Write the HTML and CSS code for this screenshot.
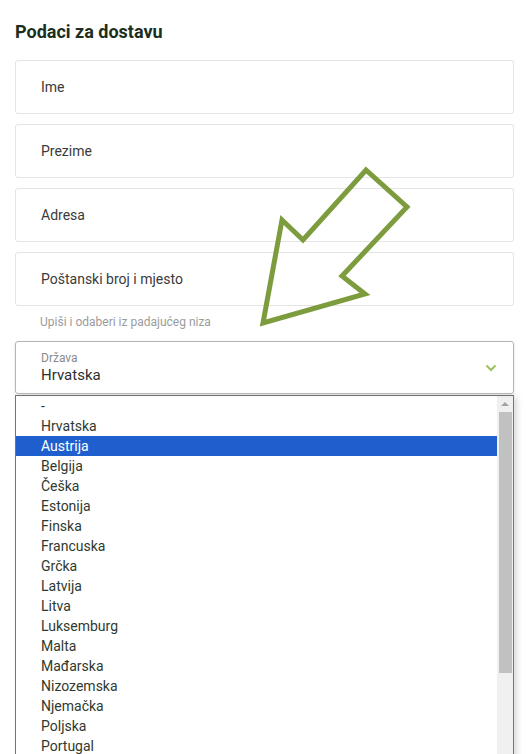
FILE: index.html
```html
<!DOCTYPE html>
<html lang="hr">
    <head>
        <title>Podaci za dostavu</title>
        <meta charset="utf-8">
        <meta name="viewport" content="width=device-width, initial-scale=1.0">
        <link rel="stylesheet" href="styles.css">
    </head>
    <body>
        <main class="delivery">
            <h2>Podaci za dostavu</h2>
            <div class="fields">
                <div class="field">Ime</div>
                <div class="field">Prezime</div>
                <div class="field">Adresa</div>
                <div class="field">Poštanski broj i mjesto</div>
            </div>
            <p class="hint">Upiši i odaberi iz padajućeg niza</p>
            <div class="select">
                <span class="select-label">Država</span>
                <span class="select-value">Hrvatska</span>
                <svg class="chevron" width="12" height="8" viewBox="0 0 12 8">
                    <path d="M1.5 1.5 L6 6 L10.5 1.5" fill="none" stroke="#9cc25c" stroke-width="2"/>
                </svg>
            </div>
            <div class="dropdown">
                <ul class="options">
                    <li>-</li>
                    <li>Hrvatska</li>
                    <li class="selected">Austrija</li>
                    <li>Belgija</li>
                    <li>Češka</li>
                    <li>Estonija</li>
                    <li>Finska</li>
                    <li>Francuska</li>
                    <li>Grčka</li>
                    <li>Latvija</li>
                    <li>Litva</li>
                    <li>Luksemburg</li>
                    <li>Malta</li>
                    <li>Mađarska</li>
                    <li>Nizozemska</li>
                    <li>Njemačka</li>
                    <li>Poljska</li>
                    <li>Portugal</li>
                </ul>
                <div class="scrollbar">
                    <span class="scroll-up"></span>
                    <span class="scroll-thumb"></span>
                </div>
            </div>
        </main>
        <!-- annotation arrow drawn over the form -->
        <svg class="pointer" width="531" height="754" viewBox="0 0 531 754">
            <polygon points="263,323 282,220 303,240 366,170 407,207 342,276 365,294"
                     fill="none" stroke="#7d9c3e" stroke-width="5" stroke-linejoin="miter"/>
        </svg>
    </body>
</html>
```

FILE: styles.css
```css
* {
    margin: 0;
    padding: 0;
    box-sizing: border-box;
}
body {
    height: 754px;
    overflow: hidden;
    background-color: white;
    font-family: Roboto, "Noto Sans", sans-serif;
    color: #333a33;
}
.delivery {
    width: 499px;
    margin-left: 15px;
    padding-top: 21px;
}
h2 {
    font-size: 18px;
    line-height: 21px;
    font-weight: 700;
    color: #1c2e1d;
    margin-bottom: 18px;
}
.fields {
    display: flex;
    flex-direction: column;
    gap: 10px;
}
.field {
    height: 54px;
    border: 1px solid #e4e4e4;
    border-radius: 3px;
    display: flex;
    align-items: center;
    padding-left: 25px;
    font-size: 14px;
    color: #3a3a3a;
}
.hint {
    font-size: 12px;
    line-height: 14px;
    color: #9b9b9b;
    padding: 9px 0 0 25px;
    margin-bottom: 12px;
}
.select {
    position: relative;
    height: 53px;
    border: 1px solid #b5b5b5;
    border-radius: 3px;
    padding: 9px 0 0 25px;
    display: flex;
    flex-direction: column;
    box-shadow: 0 1px 3px rgba(0, 0, 0, 0.12);
}
.select-label {
    font-size: 12px;
    line-height: 14px;
    color: #8a8a8a;
}
.select-value {
    font-size: 15px;
    line-height: 21px;
    color: #2e2e2e;
}
.chevron {
    position: absolute;
    right: 16px;
    top: 22px;
}
.dropdown {
    display: flex;
    margin-top: 1px;
    width: 499px;
    height: 380px;
    border: 1px solid #767676;
    border-bottom: none;
    background-color: white;
    box-shadow: 3px 2px 6px rgba(0, 0, 0, 0.15);
}
.options {
    flex: 1;
    list-style: none;
}
.options li {
    height: 20px;
    line-height: 20px;
    padding-left: 25px;
    font-size: 14px;
    color: #2f3a2f;
}
.options li.selected {
    background-color: #1e5fcd;
    color: white;
}
.scrollbar {
    width: 16px;
    background-color: #f0f0f0;
    display: flex;
    flex-direction: column;
    align-items: center;
}
.scroll-up {
    width: 0;
    height: 0;
    margin-top: 6px;
    border-left: 4px solid transparent;
    border-right: 4px solid transparent;
    border-bottom: 4px solid #a3a3a3;
}
.scroll-thumb {
    width: 13px;
    height: 261px;
    margin-top: 6px;
    background-color: #c1c1c1;
}
.pointer {
    position: absolute;
    left: 0;
    top: 0;
    pointer-events: none;
}
```
